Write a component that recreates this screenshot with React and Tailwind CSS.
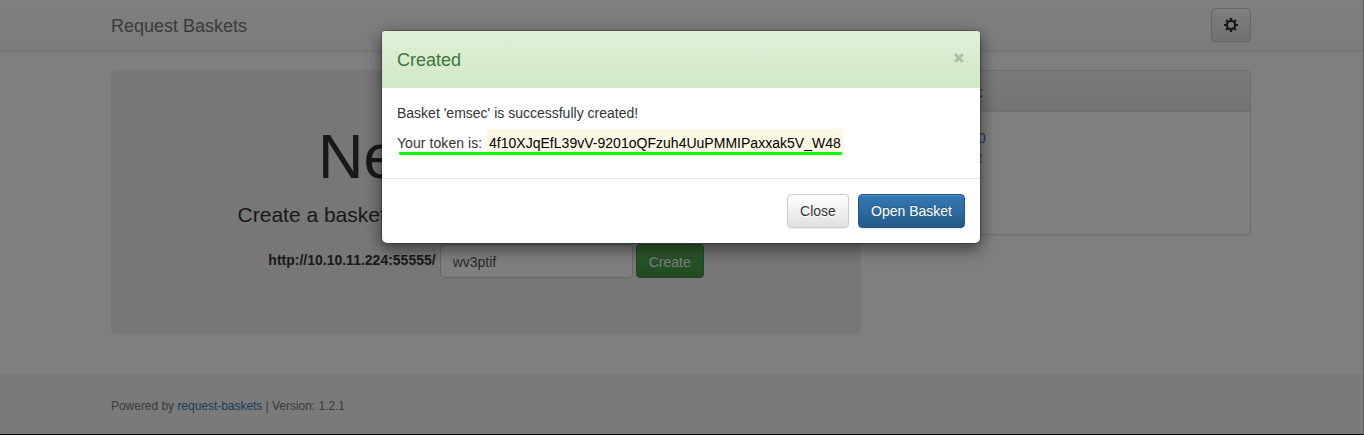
const GEAR_TEETH = [0, 45, 90, 135, 180, 225, 270, 315];

function GearIcon() {
  return (
    <svg className="block size-[14px]" viewBox="0 0 14 14" fill="none">
      <circle cx="7" cy="7" r="4.2" stroke="#333" strokeWidth="2.3" />
      {GEAR_TEETH.map((angle) => (
        <rect key={angle} x="5.9" y="0" width="2.2" height="2.6" rx="0.2" fill="#333" transform={`rotate(${angle} 7 7)`} />
      ))}
    </svg>
  );
}

function Navbar() {
  return (
    <nav className="h-[51px] w-full border-b border-[#e7e7e7] bg-linear-to-b from-white to-[#f8f8f8] shadow-[inset_0_1px_0_rgba(255,255,255,.15),0_1px_5px_rgba(0,0,0,.075)]">
      <div className="ml-[111px] flex w-[1140px] items-start justify-between">
        <span className="pt-4 text-[18px] leading-5 text-[#777]">Request Baskets</span>
        <button className="mt-2 flex h-[34px] w-10 items-center justify-center rounded border border-[#ccc] bg-linear-to-b from-white to-[#e0e0e0] shadow-[inset_0_1px_0_rgba(255,255,255,.15),0_1px_1px_rgba(0,0,0,.075)]">
          <GearIcon />
        </button>
      </div>
    </nav>
  );
}

function CreatePanel() {
  return (
    <section className="h-[264px] w-[750px] rounded-md bg-[#eee] pt-12 text-center">
      <h1 className="pt-1 text-[63px] leading-[69px] text-[#333]">New Basket</h1>
      <p className="mt-[9px] text-[21px] leading-[30px]">Create a basket to collect and inspect HTTP requests</p>
      <form className="mt-[14px] flex items-start justify-center gap-1">
        <label className="pt-[6px] text-[14px] leading-5">
          <b>http://10.10.11.224:55555/</b>
        </label>
        <input
          className="h-[34px] w-[193px] rounded border border-[#ccc] bg-white px-3 pt-0.5 text-[14px] text-[#555] shadow-[inset_0_1px_1px_rgba(0,0,0,.075)]"
          defaultValue="wv3ptif"
        />
        <button
          type="button"
          className="-ml-px h-[34px] w-[68px] rounded border border-[#3e8f3e] bg-linear-to-b from-[#5cb85c] to-[#419641] pt-0.5 text-[14px] text-white text-shadow-[0_-1px_0_rgba(0,0,0,.2)]"
        >
          Create
        </button>
      </form>
    </section>
  );
}

function BasketList() {
  return (
    <aside className="h-[165px] w-[360px] rounded border border-[#ddd] bg-white shadow-[0_1px_2px_rgba(0,0,0,.05)]">
      <div className="h-[41px] rounded-t-[3px] border-b border-[#ddd] bg-linear-to-b from-[#f5f5f5] to-[#e8e8e8] px-[15px] py-[11px] text-[14px] leading-5">
        My Baskets:
      </div>
      <ul className="pt-4 pl-[86px] text-[14px] leading-5 text-[#337ab7]">
        <li>0</li>
        <li>t</li>
      </ul>
    </aside>
  );
}

function CreatedDialog() {
  return (
    <div
      role="dialog"
      className="absolute top-[30px] left-[381px] flex h-[214px] w-[600px] flex-col rounded-md border border-black/20 bg-white bg-clip-padding text-[14px] leading-5 shadow-[0_5px_15px_rgba(0,0,0,.5)]"
    >
      <header className="flex h-[57px] justify-between rounded-t-[3px] border-b border-[#d0e9c6] bg-linear-to-b from-[#dff0d8] to-[#d0e9c6] px-[15px]">
        <h4 className="pt-[16px] text-[18px] leading-[26px] text-[#3c763d]">Created</h4>
        <svg className="mt-[22px] mr-px size-[10px]" viewBox="0 0 10 10" stroke="#aabfa4" strokeWidth="2.9">
          <path d="M1.3 1.3 8.7 8.7M8.7 1.3 1.3 8.7" />
        </svg>
      </header>
      <div className="flex h-[90px] flex-col px-[15px] pt-[15px]">
        <p>Basket 'emsec' is successfully created!</p>
        <div className="relative mt-[6px] flex h-[27px] items-stretch gap-[5px] whitespace-nowrap">
          <span className="w-[85px] pt-1 tracking-[0.07px]">Your token is:</span>
          <mark className="w-[357px] bg-[#fcf8e3] pt-1 pl-[2px] tracking-[0.02px] text-black">
            4f10XJqEfL39vV-9201oQFzuh4UuPMMIPaxxak5V_W48
          </mark>
          <span className="absolute top-[23px] left-[1.5px] h-[3px] w-[443px] rounded-[1px] bg-[#00ff00]" />
        </div>
      </div>
      <footer className="flex flex-1 justify-end gap-[9px] border-t border-[#e5e5e5] px-[15px] pt-[15px]">
        <button className="h-[34px] w-[62px] rounded border border-[#ccc] bg-linear-to-b from-white to-[#e0e0e0] text-[#333] shadow-[0_1px_1px_rgba(0,0,0,.075)] text-shadow-[0_1px_0_#fff]">
          Close
        </button>
        <button className="h-[34px] w-[107px] rounded border border-[#245580] bg-linear-to-b from-[#337ab7] to-[#265a88] text-white shadow-[inset_0_1px_0_rgba(255,255,255,.15),0_1px_1px_rgba(0,0,0,.075)] text-shadow-[0_-1px_0_rgba(0,0,0,.2)]">
          Open Basket
        </button>
      </footer>
    </div>
  );
}

export default function App() {
  return (
    <div className="relative h-[435px] w-[1364px] overflow-hidden border-r border-b border-r-[#606060] border-b-black bg-white font-['Liberation_Sans',Arial,sans-serif] text-[#333]">
      <div className="flex h-[434px] flex-col">
        <Navbar />
        <main className="mt-[19px] ml-[111px] flex w-[1140px] flex-1 items-start justify-between">
          <CreatePanel />
          <BasketList />
        </main>
        <footer className="h-[60px] bg-[#f5f5f5] pt-[22px] pl-[111px] text-[12px] leading-5 tracking-[-0.03px] text-[#777]">
          Powered by <a className="text-[#337ab7]">request-baskets</a> | Version: 1.2.1
        </footer>
      </div>
      <div className="absolute inset-0 bg-black/50" />
      <CreatedDialog />
    </div>
  );
}
